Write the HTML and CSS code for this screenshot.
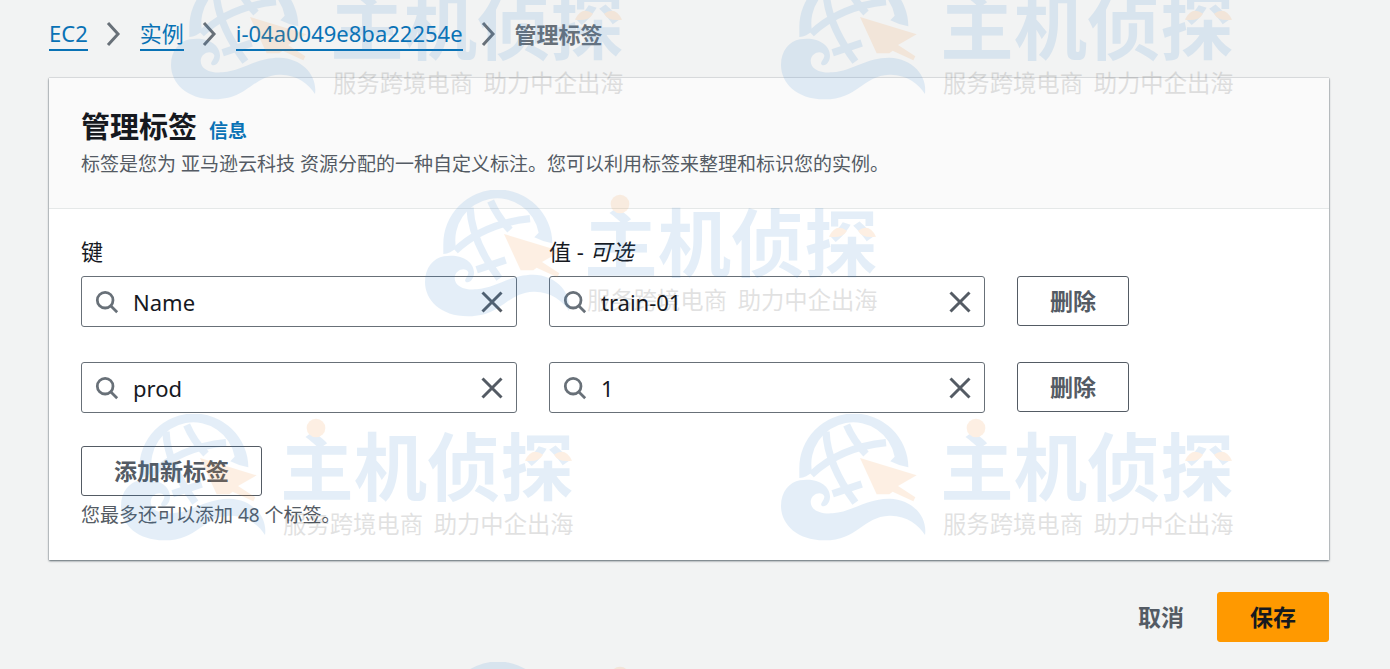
FILE: index.html
```html
<!DOCTYPE html>
<html lang="zh-CN">
<head>
<meta charset="utf-8">
<meta name="viewport" content="width=device-width, initial-scale=1">
<title>管理标签</title>
<link rel="stylesheet" href="styles.css">
</head>
<body>
<svg class="defs" aria-hidden="true">
  <symbol id="chevron" viewBox="0 0 16 26"><path d="M2 2 12 13 2 24" fill="none" stroke="currentColor" stroke-width="3"/></symbol>
  <symbol id="search" viewBox="0 0 26 26"><circle cx="11" cy="11" r="8.5" fill="none" stroke="currentColor" stroke-width="3"/><path d="m17 17 7 7" fill="none" stroke="currentColor" stroke-width="3"/></symbol>
  <symbol id="close" viewBox="0 0 22 22"><path d="m1.5 1.5 19 19m0-19-19 19" fill="none" stroke="currentColor" stroke-width="3"/></symbol>
  <symbol id="brand" viewBox="35 42 1365 390">
    <g class="brand-blue">
      <path d="M90 234V206A163 163 0 0 1 417 202Q388 197 363 184L376 170A126 126 0 0 0 128 216Q112 233 90 234Z"/>
      <path class="brand-line" d="M170 95Q174 195 258 308M232 75Q252 122 290 162M126 224Q212 142 350 128M190 281 277 252"/>
      <path d="M92 241C143 232 183 257 182 291C181 309 170 322 158 318C149 312 166 301 165 289C159 272 126 278 124 305C124 331 153 343 190 340C250 335 290 296 360 296C430 298 475 350 467 405C449 375 410 345 360 347C280 350 265 421 165 421C80 421 35 370 35 318C35 275 60 247 92 241Z"/>
      <text class="brand-name" x="513" y="286">主机侦探</text>
    </g>
    <g class="brand-orange">
      <path d="m272 174 170 52-56 32 52 34-6 12-62-29-10 8h-38Z"/>
      <circle cx="620" cy="84" r="28"/>
      <path d="M1247 182q20-42 54-18-14 24-54 18ZM1388 182q-20-42-54-18 14 24 54 18Z"/>
    </g>
    <g class="brand-grey">
      <text x="521" y="399">服务跨境电商</text>
      <text x="973" y="399">助力中企出海</text>
    </g>
  </symbol>
</svg>

<div class="page">
  <nav class="breadcrumb" aria-label="导航路径">
    <a href="#">EC2</a>
    <svg class="chevron"><use href="#chevron"/></svg>
    <a href="#">实例</a>
    <svg class="chevron"><use href="#chevron"/></svg>
    <a href="#">i-04a0049e8ba22254e</a>
    <svg class="chevron"><use href="#chevron"/></svg>
    <span class="current" aria-current="page">管理标签</span>
  </nav>

  <form>
    <section class="panel">
      <header class="panel-header">
        <div class="title-row">
          <h1>管理标签</h1>
          <a class="info" href="#">信息</a>
        </div>
        <p class="description">标签是您为 亚马逊云科技 资源分配的一种自定义标注。您可以利用标签来整理和标识您的实例。</p>
      </header>
      <div class="panel-body">
        <div class="tag-row labels">
          <label for="key-1">键</label>
          <label for="value-1">值 - <em>可选</em></label>
        </div>
        <div class="tag-row">
          <div class="field">
            <svg class="search"><use href="#search"/></svg>
            <input id="key-1" type="text" value="Name">
            <button type="button" class="clear" aria-label="清除键"><svg><use href="#close"/></svg></button>
          </div>
          <div class="field">
            <svg class="search"><use href="#search"/></svg>
            <input id="value-1" type="text" value="train-01">
            <button type="button" class="clear" aria-label="清除值"><svg><use href="#close"/></svg></button>
          </div>
          <button type="button" class="button">删除</button>
        </div>
        <div class="tag-row">
          <div class="field">
            <svg class="search"><use href="#search"/></svg>
            <input aria-label="键" type="text" value="prod">
            <button type="button" class="clear" aria-label="清除键"><svg><use href="#close"/></svg></button>
          </div>
          <div class="field">
            <svg class="search"><use href="#search"/></svg>
            <input aria-label="值" type="text" value="1">
            <button type="button" class="clear" aria-label="清除值"><svg><use href="#close"/></svg></button>
          </div>
          <button type="button" class="button">删除</button>
        </div>
        <button type="button" class="button">添加新标签</button>
        <p class="hint">您最多还可以添加 48 个标签。</p>
      </div>
    </section>
    <div class="actions">
      <button type="button" class="button link">取消</button>
      <button type="submit" class="button primary">保存</button>
    </div>
  </form>
</div>

<div class="watermarks" aria-hidden="true">
  <svg class="mark mark-1"><use href="#brand"/></svg>
  <svg class="mark mark-2"><use href="#brand"/></svg>
  <svg class="mark mark-3"><use href="#brand"/></svg>
  <svg class="mark mark-4"><use href="#brand"/></svg>
  <svg class="mark mark-5"><use href="#brand"/></svg>
  <svg class="mark mark-6"><use href="#brand"/></svg>
</div>
</body>
</html>
```
FILE: styles.css
```css
* { box-sizing: border-box; }

body {
  margin: 0;
  background: #f2f3f3;
  color: #16191f;
  font: 22px/32px "Noto Sans", "Noto Sans CJK SC", sans-serif;
}

h1, p { margin: 0; }
a { color: #0972b5; text-decoration: none; }
button, input { font: inherit; color: inherit; }
svg { display: block; flex: none; }

.defs { position: absolute; width: 0; height: 0; }

.page { padding: 17px 61px 26px 49px; }

.breadcrumb {
  display: flex;
  align-items: center;
  gap: 18px;
  margin-bottom: 27px;
}
.breadcrumb a { border-bottom: 2px solid; }
.chevron { width: 16px; height: 26px; color: #687078; }
.current { color: #687078; font-weight: 700; }

.panel {
  background: #fff;
  box-shadow: 0 1px 2px rgba(0, 20, 30, .6), 0 0 1px rgba(0, 20, 30, .4);
}
.panel-header {
  padding: 29px 32px 30px;
  background: #fafafa;
  border-bottom: 1px solid #e5e8e8;
}
.title-row { display: flex; align-items: baseline; gap: 12px; margin-bottom: 3px; }
h1 { font-size: 29px; line-height: 40px; }
.info { font-size: 19px; line-height: 28px; font-weight: 700; }
.description, .hint { font-size: 19px; line-height: 28px; color: #545b64; }
.panel-body { padding: 26px 32px 31px; }

.tag-row {
  display: grid;
  grid-template-columns: 3fr 3fr 2fr;
  justify-items: start;
  margin: 0 -32px 35px 0;
}
.tag-row > :nth-child(-n+2) { width: calc(100% - 32px); }
.tag-row.labels { margin-bottom: 9px; }
.tag-row:last-of-type { margin-bottom: 33px; }

.field {
  display: flex;
  align-items: center;
  gap: 14px;
  height: 51px;
  padding: 0 13px;
  border: 1px solid #687078;
  border-radius: 3px;
}
.field input {
  flex: 1;
  min-width: 0;
  height: 48px;
  padding: 0;
  border: 0;
  outline: 0;
  background: transparent;
}
.search { width: 24px; height: 24px; color: #687078; }
.clear { padding: 0; border: 0; background: none; color: #545b64; }
.clear svg { width: 22px; height: 22px; }

.button {
  height: 50px;
  padding: 0 32px 1px;
  border: 1px solid #545b64;
  border-radius: 3px;
  background: #fff;
  color: #545b64;
  font-size: 23px;
  font-weight: 700;
  white-space: nowrap;
}
.hint { margin-top: 5px; }
.actions { display: flex; justify-content: flex-end; margin-top: 32px; }
.link { border-color: transparent; background: none; }
.primary { border-color: #ff9900; background: #ff9900; color: #16191f; }

/* Repeated brand stamp laid over the whole page */
.watermarks {
  position: absolute;
  inset: 0;
  overflow: hidden;
  pointer-events: none;
}
.mark { position: absolute; width: 455px; height: 130px; opacity: .13; }
.mark-1 { left: 171px; top: -27px; }
.mark-2 { left: 781px; top: -27px; }
.mark-3 { left: 425px; top: 190px; }
.mark-4 { left: 121px; top: 414px; }
.mark-5 { left: 781px; top: 414px; }
.mark-6 { left: 425px; top: 662px; }
.brand-blue { fill: #3484ce; }
.brand-line { fill: none; stroke: #3484ce; stroke-width: 22; }
.brand-orange { fill: #f28e30; }
.brand-grey { fill: #232323; font-size: 70px; }
.brand-name { font-size: 220px; font-weight: 700; }
```
